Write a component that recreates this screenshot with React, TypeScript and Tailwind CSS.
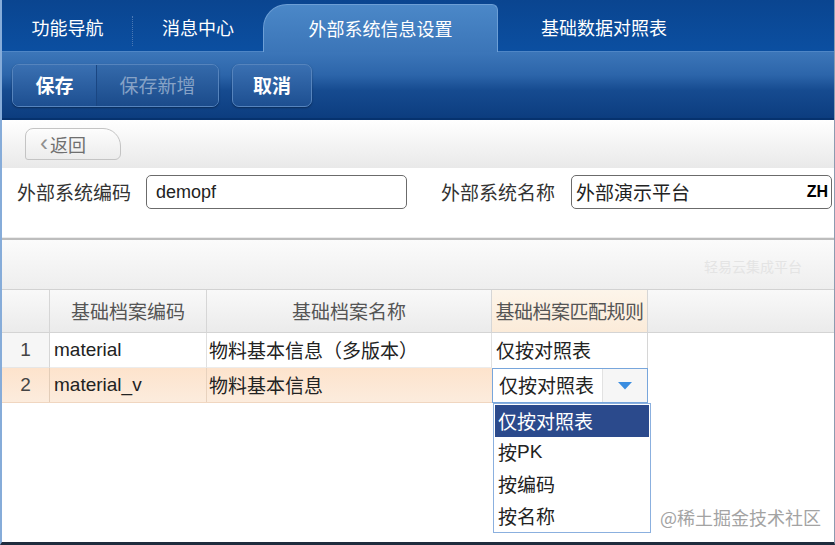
import React from "react";

const cjk = { fontFamily: '"Noto Sans CJK SC", "Noto Sans", sans-serif' };
const latin = { fontFamily: '"Liberation Sans", "Noto Sans CJK SC", sans-serif' };

export default function App() {
  return (
    <div
      className="relative w-[835px] h-[545px] overflow-hidden bg-white border-l-2 border-l-[#86acd9] border-r border-r-[#8c9bb0] border-b-[3px] border-b-[#1f2c3d] flex flex-col"
      style={cjk}
    >
      {/* Tab bar */}
      <div className="h-[52px] shrink-0 flex items-end bg-gradient-to-b from-[#0a4590] to-[#0b4fa1] border-b border-b-[#4f86c6]">
        <div className="w-[131px] h-full flex items-center justify-center text-[18px] text-white pt-[4px] relative">
          功能导航
          <div className="absolute right-0 top-[16px] h-[30px] border-r border-dotted border-r-[#4a78b4]" />
        </div>
        <div className="w-[130px] h-full flex items-center justify-center text-[18px] text-white pt-[4px]">
          消息中心
        </div>
        <div className="w-[235px] h-[48px] mb-[-1px] flex items-center justify-center text-[18px] text-white rounded-tl-[24px] rounded-tr-[6px] border-t border-l border-r border-[#6d9fd6] bg-gradient-to-b from-[#4b88c8] to-[#3b75b8]">
          外部系统信息设置
        </div>
        <div className="w-[212px] h-full flex items-center justify-center text-[18px] text-white pt-[4px]">
          基础数据对照表
        </div>
      </div>

      {/* Toolbar */}
      <div className="h-[66px] shrink-0 flex items-center gap-[13px] px-[10px] bg-[linear-gradient(to_bottom,#3c76b9_0%,#2c65aa_35%,#164b90_58%,#0c3d7f_100%)]">
        <div className="h-[43px] flex rounded-[7px] border border-[#5684bd] overflow-hidden shadow-[0_1px_2px_rgba(0,0,0,0.35)]">
          <div className="w-[84px] h-full flex items-center justify-center text-[19px] font-bold text-white bg-gradient-to-b from-[#3a70b2] to-[#1d4f91] border-r border-r-[#1a4682]">
            保存
          </div>
          <div className="w-[121px] h-full flex items-center justify-center text-[19px] text-[#86a2c6] bg-gradient-to-b from-[#346aab] to-[#1b4b8b]">
            保存新增
          </div>
        </div>
        <div className="w-[80px] h-[43px] flex items-center justify-center rounded-[7px] border border-[#5684bd] text-[19px] font-bold text-white bg-gradient-to-b from-[#3a70b2] to-[#1d4f91] shadow-[0_1px_2px_rgba(0,0,0,0.35)]">
          取消
        </div>
      </div>
      <div className="h-[2px] shrink-0 bg-[#06326e]" />

      {/* Back area */}
      <div className="h-[48px] shrink-0 flex items-center pl-[23px] bg-gradient-to-b from-[#ffffff] to-[#e9e9e9]">
        <div className="w-[96px] h-[32px] flex items-center pl-[14px] rounded-tl-[8px] rounded-tr-[18px] rounded-br-[6px] rounded-bl-[3px] border border-[#c4c4c4] bg-gradient-to-b from-[#fdfdfd] to-[#ececec] text-[18px] text-[#6f6f6f]">
          <span className="text-[#8f8f8f] mr-[2px] text-[24px] leading-none pb-[3px]" style={latin}>‹</span>返回
        </div>
      </div>

      {/* Form row */}
      <div className="h-[70px] shrink-0 flex items-start pt-[7px] bg-white border-b border-b-[#ececec]">
        <div className="flex items-center">
          <div className="pl-[15px] w-[144px] text-[19px] text-[#333]">外部系统编码</div>
          <div className="w-[261px] h-[34px] flex items-center pl-[9px] rounded-[5px] border border-[#6b6b6b] text-[18px] text-[#222]" style={latin}>
            demopf
          </div>
        </div>
        <div className="flex items-center ml-[34px]">
          <div className="w-[130px] text-[19px] text-[#333]">外部系统名称</div>
          <div className="w-[261px] h-[34px] flex items-center justify-between pl-[4px] pr-[3px] rounded-[5px] border border-[#6b6b6b] text-[19px] text-[#222]">
            <span>外部演示平台</span>
            <span className="text-[16px] font-bold text-black" style={latin}>ZH</span>
          </div>
        </div>
      </div>
      <div className="h-[2px] shrink-0 bg-[#bdbdbd]" />

      {/* Strip */}
      <div className="h-[50px] shrink-0 flex items-center justify-end pr-[32px] pt-[4px] bg-gradient-to-b from-[#fbfbfb] to-[#eeeeee] border-b border-b-[#d2d2d2]">
        <span className="text-[14px] text-[#e4e4e4]">轻易云集成平台</span>
      </div>

      {/* Grid */}
      <div className="shrink-0 flex flex-col text-[19px]">
        <div className="h-[43px] flex bg-gradient-to-b from-[#f9f9f9] to-[#ebebeb] border-b border-b-[#d4d4d4] text-[#555]">
          <div className="w-[48px] border-r border-r-[#d6d6d6]" />
          <div className="w-[157px] flex items-center justify-center border-r border-r-[#d6d6d6]">基础档案编码</div>
          <div className="w-[285px] flex items-center justify-center border-r border-r-[#d6d6d6]">基础档案名称</div>
          <div className="w-[156px] flex items-center justify-center border-r border-r-[#d6d6d6] bg-gradient-to-b from-[#fdf5ea] to-[#fbebd9] tracking-[-0.5px]">基础档案匹配规则</div>
          <div className="flex-1" />
        </div>
        <div className="h-[35px] flex text-[#222]">
          <div className="w-[48px] flex items-center justify-center bg-[#f6f6f6] border-r border-r-[#d6d6d6] border-b border-b-[#e6e6e6] text-[#444]" style={latin}>1</div>
          <div className="w-[157px] flex items-center pl-[4px] border-r border-r-[#e0e0e0] border-b border-b-[#ececec]" style={latin}>material</div>
          <div className="w-[285px] flex items-center pl-[2px] border-r border-r-[#e0e0e0] border-b border-b-[#ececec]">物料基本信息（多版本）</div>
          <div className="w-[156px] flex items-center pl-[4px] border-r border-r-[#d6d6d6]">仅按对照表</div>
          <div className="flex-1" />
        </div>
        <div className="h-[35px] flex text-[#222]">
          <div className="w-[490px] flex bg-gradient-to-b from-[#fde3cc] to-[#fcecdd] border-b border-b-[#f0d6c0]">
            <div className="w-[48px] flex items-center justify-center border-r border-r-[#e3cdb8] text-[#444]" style={latin}>2</div>
            <div className="w-[157px] flex items-center pl-[4px] border-r border-r-[#e8d2be]" style={latin}>material_v</div>
            <div className="w-[285px] flex items-center pl-[2px]">物料基本信息</div>
          </div>
          <div className="w-[156px] h-[35px] flex border border-[#78a6dc] bg-white">
            <div className="flex-1 flex items-center pl-[6px]">仅按对照表</div>
            <div className="w-[45px] flex items-center justify-center border-l border-l-[#e2e2e2] bg-[#f6f6f6]">
              <svg width="16" height="9" viewBox="0 0 16 9">
                <polygon points="1,1 15,1 8,8.5" fill="#3a8de0" />
              </svg>
            </div>
          </div>
          <div className="flex-1" />
        </div>
      </div>

      {/* Dropdown list */}
      <div className="absolute left-[491px] top-[403px] w-[158px] h-[130px] bg-white border border-[#8bb0df] text-[19px] text-[#222] flex flex-col pt-[1px] px-[1px]">
        <div className="h-[32px] flex items-center pl-[3px] bg-[#2b4a8c] text-white">仅按对照表</div>
        <div className="h-[32px] flex items-center pl-[3px]">按<span style={latin}>PK</span></div>
        <div className="h-[32px] flex items-center pl-[3px]">按编码</div>
        <div className="h-[32px] flex items-center pl-[3px]">按名称</div>
      </div>

      {/* Watermark */}
      <div className="absolute left-[658px] top-[504px] text-[18px] text-[#a3a3a3]">@稀土掘金技术社区</div>
    </div>
  );
}
